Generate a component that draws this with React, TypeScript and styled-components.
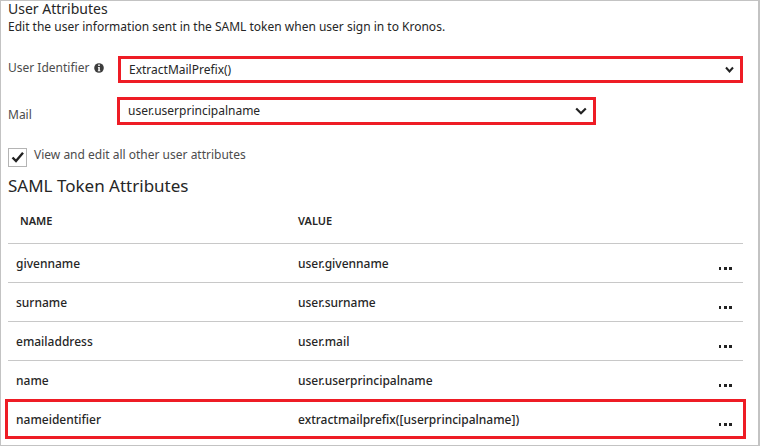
import React, { useState } from "react";
import styled, { createGlobalStyle } from "styled-components";

const GlobalStyle = createGlobalStyle`
  *, *::before, *::after { box-sizing: border-box; }
  body {
    margin: 0;
    background: #fff;
    color: #262626;
    font-family: "Noto Sans", "Open Sans", sans-serif;
    font-size: 12px;
    line-height: 16px;
  }
`;

const RED = "#ee1c25";
const LINE = "#c8c8c8";

const Panel = styled.main`
  min-height: 100vh;
  padding: 0 15px 4px 7px;
  border: 1px solid #c3c3c3;
  border-right-width: 2px;
`;

const Title = styled.h1`
  margin: 0;
  font-size: 14px;
  font-weight: 400;
  line-height: 16px;
`;

const Intro = styled.p`
  margin: 2px 0 0;
`;

const Fields = styled.div`
  display: grid;
  gap: 14px;
  margin-top: 21px;
`;

const Field = styled.div<{ $label: number }>`
  display: grid;
  grid-template-columns: ${(p) => p.$label}px 1fr;
  align-items: center;
`;

const FieldLabel = styled.label<{ $low?: boolean }>`
  display: flex;
  align-items: center;
  gap: 5px;
  padding-top: ${(p) => (p.$low ? 8 : 0)}px;
  padding-bottom: ${(p) => (p.$low ? 0 : 4)}px;
  color: #4c4c4c;
`;

const SelectBox = styled.div<{ $inset?: number }>`
  position: relative;
  margin-right: ${(p) => p.$inset ?? 0}px;
  border: 3px solid ${RED};
`;

const Select = styled.select<{ $height: number }>`
  display: block;
  width: 100%;
  height: ${(p) => p.$height}px;
  padding: 0 28px 0 8px;
  border: 0;
  background: transparent;
  color: inherit;
  font: inherit;
  appearance: none;
`;

const Arrow = styled.svg`
  position: absolute;
  top: 0;
  bottom: 0;
  right: 6px;
  margin: auto 0;
  fill: none;
  stroke: #222;
  pointer-events: none;
`;

const CheckLabel = styled.label`
  display: flex;
  align-items: center;
  gap: 7px;
  margin-top: 22px;
  color: #4c4c4c;
`;

const CheckText = styled.span`
  padding-bottom: 4px;
`;

const CheckBox = styled.span`
  position: relative;
  display: block;
  width: 19px;
  height: 19px;
`;

const CheckInput = styled.input`
  display: block;
  width: 100%;
  height: 100%;
  margin: 0;
  border: 1px solid #b4b4b4;
  background: #fff;
  appearance: none;
`;

const Tick = styled.svg`
  position: absolute;
  inset: 0;
  fill: none;
  stroke: #222;
  stroke-width: 2.4;
  pointer-events: none;
`;

const Subtitle = styled.h2`
  margin: 7px 0 0;
  font-size: 17px;
  font-weight: 400;
  line-height: 24px;
`;

const Table = styled.table`
  width: 100%;
  border-collapse: separate;
  border-spacing: 0;
  table-layout: fixed;
  font-weight: 500;
`;

const HeadCell = styled.th<{ $indent?: number; $width?: string }>`
  width: ${(p) => p.$width ?? "auto"};
  height: 46px;
  padding: 0 0 0 ${(p) => p.$indent ?? 0}px;
  border-bottom: 1px solid ${LINE};
  font-size: 11px;
  font-weight: 600;
  text-align: left;
`;

const Cell = styled.td<{ $indent?: number }>`
  height: 39px;
  padding: 2px 0 0 ${(p) => p.$indent ?? 0}px;
  border-bottom: 1px solid ${LINE};
`;

const Row = styled.tr<{ $marked?: boolean }>`
  position: relative;
  &:last-child > td { border-bottom-color: transparent; }
  & > td:first-child::after {
    content: ${(p) => (p.$marked ? '""' : "none")};
    position: absolute;
    inset: -1px -3px 0;
    border: 3px solid ${RED};
    pointer-events: none;
  }
`;

const ActionCell = styled(Cell)`
  padding: 9px 11px 0 0;
`;

const MenuButton = styled.button`
  display: block;
  margin-left: auto;
  padding: 0;
  border: 0;
  background: none;
  line-height: 0;
  cursor: pointer;
`;

const rows = [
  { name: "givenname", value: "user.givenname" },
  { name: "surname", value: "user.surname" },
  { name: "emailaddress", value: "user.mail" },
  { name: "name", value: "user.userprincipalname" },
  { name: "nameidentifier", value: "extractmailprefix([userprincipalname])", marked: true },
];

function InfoIcon() {
  return (
    <svg width="10" height="10" viewBox="0 0 10 10" aria-hidden="true">
      <circle cx="5" cy="5" r="4.8" fill="#3c3c3c" />
      <path d="M4.2 1.6h1.6v1.4H4.2zM3.9 4h1.9v3.5h.6v.8H3.8v-.8h.5V4.8h-.4z" fill="#fff" />
    </svg>
  );
}

export default function App() {
  const [showAll, setShowAll] = useState(true);
  return (
    <>
      <GlobalStyle />
      <Panel>
        <Title>User Attributes</Title>
        <Intro>Edit the user information sent in the SAML token when user sign in to Kronos.</Intro>

        <Fields>
          <Field $label={110}>
            <FieldLabel htmlFor="identifier">
              User Identifier
              <InfoIcon />
            </FieldLabel>
            <SelectBox>
              <Select id="identifier" $height={21}>
                <option>ExtractMailPrefix()</option>
              </Select>
              <Arrow width="9" height="8" viewBox="0 0 9 8" strokeWidth="2">
                <path d="M1 1.5 4.5 5.5 8 1.5" />
              </Arrow>
            </SelectBox>
          </Field>
          <Field $label={109}>
            <FieldLabel htmlFor="mail" $low>Mail</FieldLabel>
            <SelectBox $inset={147}>
              <Select id="mail" $height={22}>
                <option>user.userprincipalname</option>
              </Select>
              <Arrow width="12" height="8" viewBox="0 0 12 8" strokeWidth="2.2">
                <path d="M1.2 1.5 6 6.2l4.8-4.7" />
              </Arrow>
            </SelectBox>
          </Field>
        </Fields>

        <CheckLabel>
          <CheckBox>
            <CheckInput type="checkbox" checked={showAll} onChange={(e) => setShowAll(e.target.checked)} />
            {showAll && (
              <Tick width="19" height="19" viewBox="0 0 19 19" aria-hidden="true">
                <path d="M4.5 9.5 8 13l7-8.2" />
              </Tick>
            )}
          </CheckBox>
          <CheckText>View and edit all other user attributes</CheckText>
        </CheckLabel>

        <Subtitle>SAML Token Attributes</Subtitle>
        <Table>
          <thead>
            <tr>
              <HeadCell $indent={12} $width="290px">NAME</HeadCell>
              <HeadCell>VALUE</HeadCell>
              <HeadCell $width="40px" aria-label="Actions" />
            </tr>
          </thead>
          <tbody>
            {rows.map((row) => (
              <Row key={row.name} $marked={row.marked}>
                <Cell $indent={8}>{row.name}</Cell>
                <Cell>{row.value}</Cell>
                <ActionCell>
                  <MenuButton type="button" aria-label={`Actions for ${row.name}`}>
                    <svg width="13" height="3" viewBox="0 0 13 3" fill="#222" aria-hidden="true">
                      <path d="M0 0h2v3H0zM5 0h3v3H5zM10 0h3v3h-3z" />
                    </svg>
                  </MenuButton>
                </ActionCell>
              </Row>
            ))}
          </tbody>
        </Table>
      </Panel>
    </>
  );
}
